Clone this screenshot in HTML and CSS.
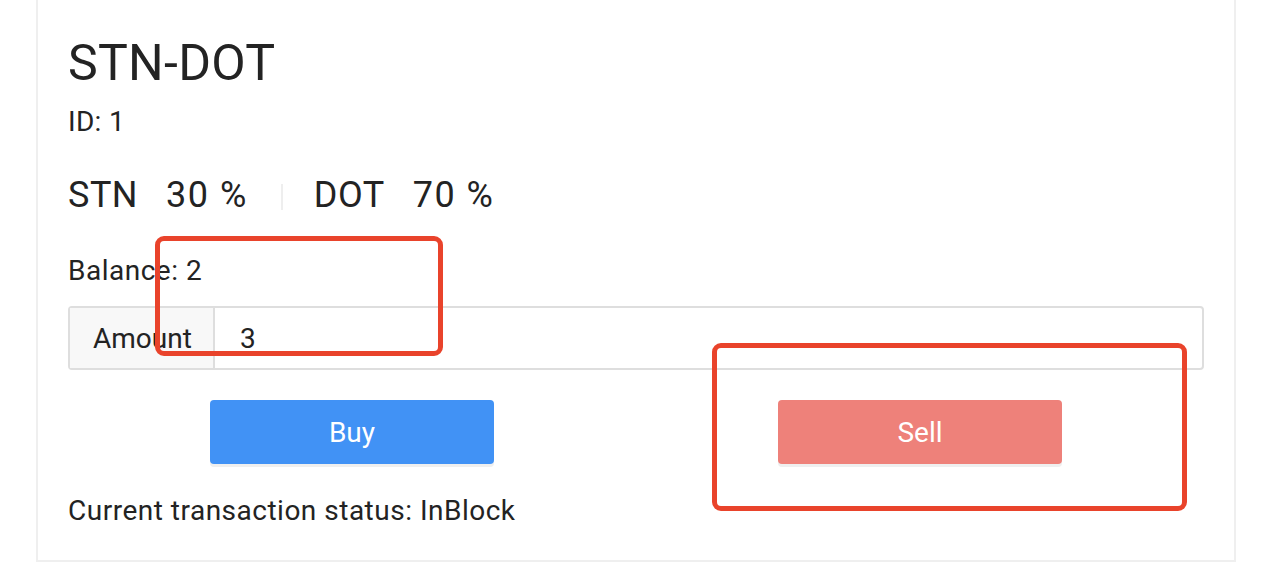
FILE: index.html
```html
<!DOCTYPE html>
<html lang="en">
<head>
<meta charset="utf-8">
<title>STN-DOT</title>
<link rel="stylesheet" href="styles.css">
</head>
<body>
<div class="page">
  <div class="card">
    <h2 class="title">STN-DOT</h2>
    <div class="id">ID: 1</div>
    <div class="ratio">
      <span class="sym">STN</span><span class="pct">30 %</span>
      <span class="sep"></span>
      <span class="sym">DOT</span><span class="pct">70 %</span>
    </div>
    <div class="balance">Balance: 2</div>
    <div class="input-group">
      <div class="label">Amount</div>
      <div class="value">3</div>
    </div>
    <div class="actions">
      <div class="cell"><button class="btn buy">Buy</button></div>
      <div class="cell"><button class="btn sell">Sell</button></div>
    </div>
    <div class="status">Current transaction status: InBlock</div>
    <div class="mark mark-balance"></div>
    <div class="mark mark-sell"></div>
  </div>
</div>
</body>
</html>
```
FILE: styles.css
```css
html, body {
  margin: 0;
  padding: 0;
  background: #ffffff;
}
body {
  font-family: Roboto, "Liberation Sans", Arial, sans-serif;
  color: #232323;
}
.page {
  width: 1266px;
  height: 584px;
  overflow: hidden;
}
.card {
  position: relative;
  margin: -10px 0 0 36px;
  width: 1136px;
  border: 2px solid #efefef;
  padding: 41px 30px 30px 30px;
  background: #fff;
}
.title {
  margin: 0;
  font-size: 50px;
  font-weight: 400;
  line-height: 60px;
  letter-spacing: 0.3px;
}
.id {
  margin-top: 9px;
  font-size: 28px;
  line-height: 39px;
  letter-spacing: 0.3px;
}
.ratio {
  margin-top: 30px;
  display: flex;
  align-items: center;
  font-size: 36px;
  line-height: 48px;
  letter-spacing: 0.5px;
}
.sym { margin-right: 28px; }
.pct { letter-spacing: 1.5px; }
.sep {
  width: 2px;
  height: 26px;
  background: #eeeeee;
  margin: 4px 31px 0 33px;
}
.balance {
  margin-top: 32px;
  font-size: 28px;
  line-height: 39px;
  letter-spacing: 0.5px;
}
.input-group {
  margin-top: 16px;
  display: flex;
  height: 64px;
  box-sizing: border-box;
  border: 2px solid #dedede;
  border-radius: 4px;
  font-size: 28px;
}
.label {
  width: 145px;
  box-sizing: border-box;
  padding-left: 23px;
  background: #f8f8f8;
  border-right: 2px solid #dedede;
  display: flex;
  align-items: center;
}
.value {
  display: flex;
  align-items: center;
  padding-left: 25px;
}
.actions {
  margin-top: 30px;
  display: grid;
  grid-template-columns: 1fr 1fr;
}
.cell {
  display: flex;
  justify-content: center;
}
.btn {
  width: 284px;
  height: 64px;
  border: 0;
  border-radius: 4px;
  color: #fff;
  font-family: Roboto, "Liberation Sans", Arial, sans-serif;
  font-size: 28px;
  box-shadow: 0 3px 0 #efefef;
  padding: 0;
}
.buy { background: #4192f5; }
.sell { background: #ee817a; }
.status {
  margin-top: 27px;
  font-size: 28px;
  line-height: 39px;
  letter-spacing: 0.5px;
}
.mark {
  position: absolute;
  border: 5px solid #e9432b;
  border-radius: 9px;
  box-sizing: border-box;
}
.mark-balance {
  left: 117px;
  top: 244px;
  width: 288px;
  height: 120px;
}
.mark-sell {
  left: 674px;
  top: 351px;
  width: 475px;
  height: 168px;
}
```
